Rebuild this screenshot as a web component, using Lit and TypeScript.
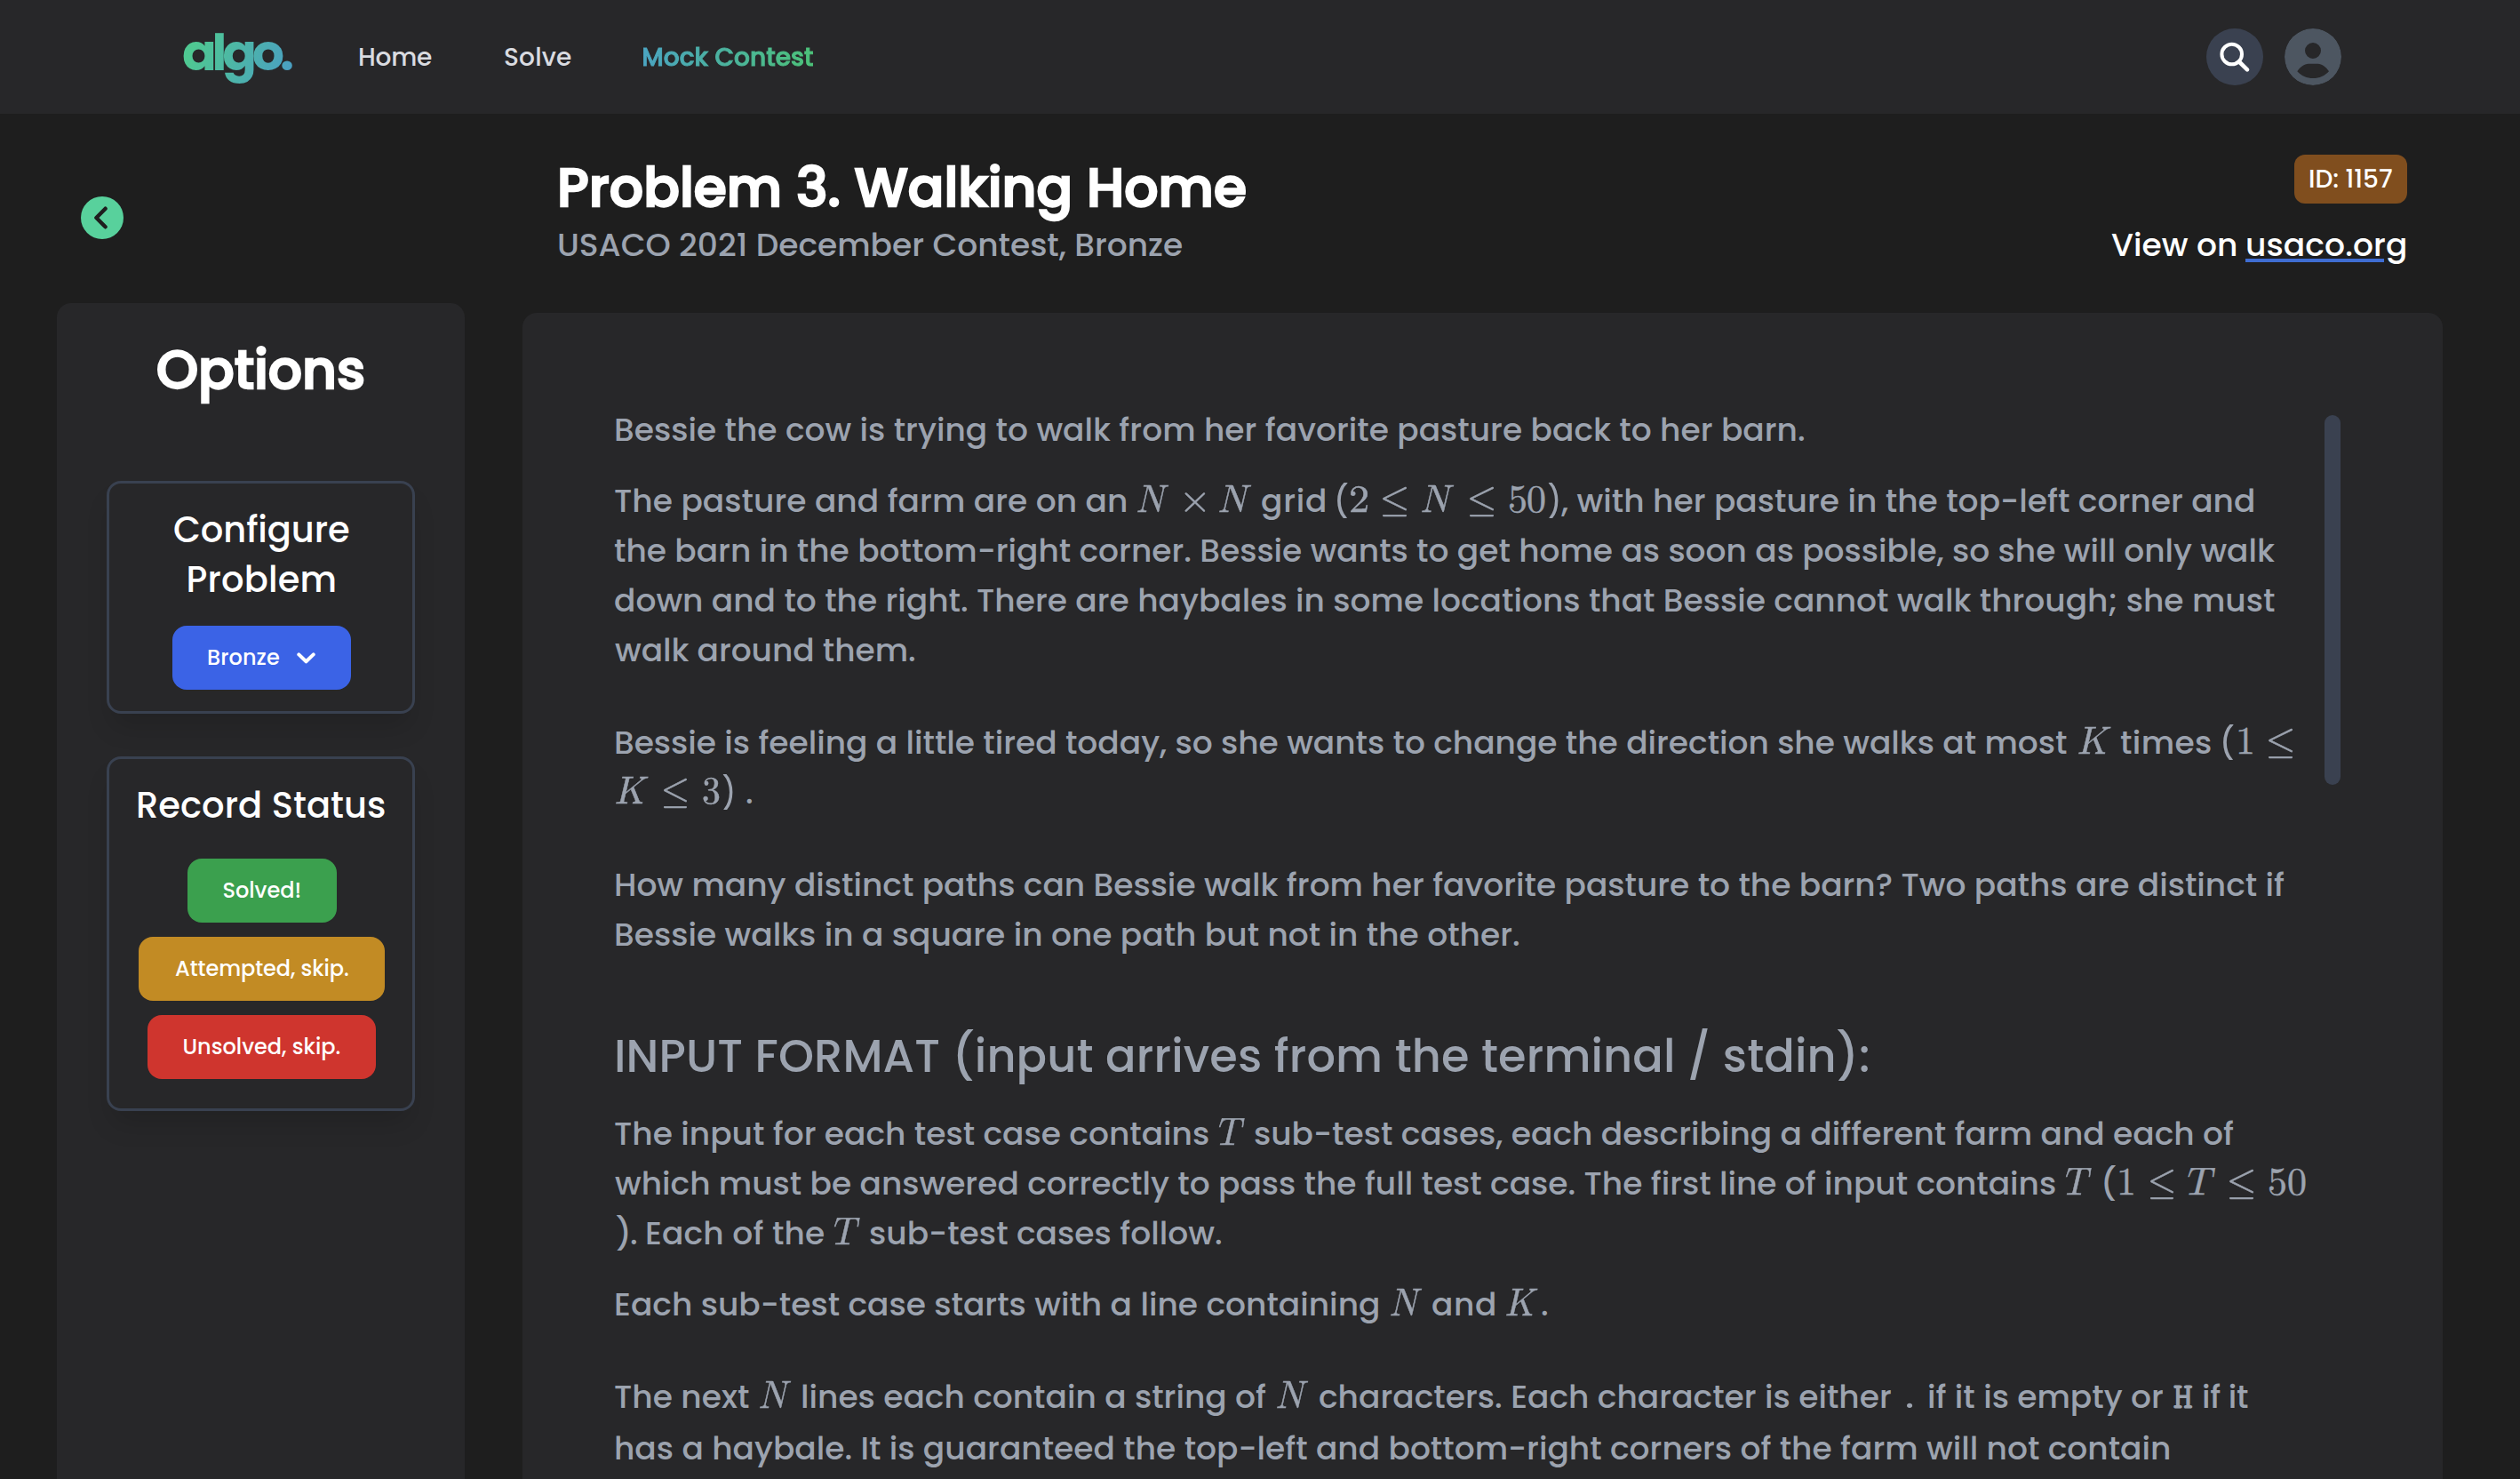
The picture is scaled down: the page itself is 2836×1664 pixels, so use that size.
import { LitElement, html, css, svg, nothing } from "lit";
import { customElement, property } from "lit/decorators.js";
import { styleMap } from "lit/directives/style-map.js";

const pen = document.createElement("canvas").getContext("2d")!;

/** One run of text whose inked width is set; tracking (or, for one glyph, its scale) is derived from it. */
@customElement("fit-text")
export class FitText extends LitElement {
  @property() text = "";
  @property({ type: Number }) w = 0;

  static styles = css`
    :host {
      display: block;
      flex: none;
      white-space: pre;
    }
    .run {
      display: inline-block;
      transform-origin: 0 50%;
      text-decoration: inherit;
    }
  `;

  render() {
    const cs = getComputedStyle(this);
    pen.font = `${cs.fontStyle} ${cs.fontWeight} ${cs.fontSize} ${cs.fontFamily}`;
    const m = pen.measureText(this.text);
    const ink = m.actualBoundingBoxLeft + m.actualBoundingBoxRight;
    const n = [...this.text].length;
    this.style.width = `${this.w}px`;
    const style =
      n > 1
        ? {
            letterSpacing: `${((this.w - ink) / (n - 1)).toFixed(3)}px`,
            marginLeft: `${m.actualBoundingBoxLeft.toFixed(2)}px`,
          }
        : {
            transform: `scaleX(${(this.w / ink).toFixed(3)})`,
            marginLeft: `${((m.actualBoundingBoxLeft * this.w) / ink).toFixed(2)}px`,
          };
    return html`<span class="run" style=${styleMap(style)}>${this.text}</span>`;
  }
}

type Kind = "p" | "v" | "m" | "c";
/** text, left edge, right edge, kind (p prose, v variable, m math, c code) */
type Run = [string, number, number, Kind?];
interface Line {
  runs: Run[];
  gap?: number;
  head?: boolean;
}

const LEFT = 692;

const STATEMENT: Line[] = [
  { runs: [["Bessie the cow is trying to walk from her favorite pasture back to her barn.", 693, 2030]] },
  {
    gap: 24,
    runs: [
      ["The pasture and farm are on an", 692, 1267],
      ["N", 1280, 1316, "v"],
      ["×", 1333, 1356, "m"],
      ["N", 1372, 1409, "v"],
      ["grid", 1420, 1491],
      ["(", 1505, 1517],
      ["2", 1520, 1539, "m"],
      ["≤", 1556, 1584, "m"],
      ["N", 1600, 1637, "v"],
      ["≤", 1654, 1682, "m"],
      ["50", 1699, 1739, "m"],
      [")", 1742, 1754],
      [", with her pasture in the top-left corner and", 1757, 2536],
    ],
  },
  { runs: [["the barn in the bottom-right corner. Bessie wants to get home as soon as possible, so she will only walk", 692, 2560]] },
  { runs: [["down and to the right. There are haybales in some locations that Bessie cannot walk through; she must", 692, 2560]] },
  { runs: [["walk around them.", 692, 1029]] },
  {
    gap: 48,
    runs: [
      ["Bessie is feeling a little tired today, so she wants to change the direction she walks at most", 693, 2326],
      ["K", 2339, 2376, "v"],
      ["times", 2387, 2488],
      ["(", 2502, 2514],
      ["1", 2519, 2535, "m"],
      ["≤", 2553, 2581, "m"],
    ],
  },
  {
    runs: [
      ["K", 693, 730, "v"],
      ["≤", 747, 774, "m"],
      ["3", 791, 810, "m"],
      [")", 813, 825],
      [".", 840, 846],
    ],
  },
  { gap: 48, runs: [["How many distinct paths can Bessie walk from her favorite pasture to the barn? Two paths are distinct if", 693, 2571]] },
  { runs: [["Bessie walks in a square in one path but not in the other.", 693, 1709]] },
  { gap: 78, head: true, runs: [["INPUT FORMAT (input arrives from the terminal / stdin):", 694, 2102]] },
  {
    gap: 30,
    runs: [
      ["The input for each test case contains", 692, 1360],
      ["T", 1372, 1401, "v"],
      ["sub-test cases, each describing a different farm and each of", 1412, 2514],
    ],
  },
  {
    runs: [
      ["which must be answered correctly to pass the full test case. The first line of input contains", 692, 2313],
      ["T", 2325, 2354, "v"],
      ["(", 2368, 2381],
      ["1", 2385, 2401, "m"],
      ["≤", 2420, 2447, "m"],
      ["T", 2462, 2493, "v"],
      ["≤", 2509, 2537, "m"],
      ["50", 2554, 2595, "m"],
    ],
  },
  {
    runs: [
      [").", 693, 716],
      ["Each of the", 728, 927],
      ["T", 939, 968, "v"],
      ["sub-test cases follow.", 979, 1374],
    ],
  },
  {
    gap: 24,
    runs: [
      ["Each sub-test case starts with a line containing", 693, 1551],
      ["N", 1565, 1601, "v"],
      ["and", 1612, 1682],
      ["K", 1695, 1731, "v"],
      [".", 1735, 1741],
    ],
  },
  {
    gap: 48,
    runs: [
      ["The next", 692, 843],
      ["N", 855, 891, "v"],
      ["lines each contain a string of", 903, 1425],
      ["N", 1437, 1473, "v"],
      ["characters. Each character is either", 1485, 2128],
      [".", 2145, 2152, "p"],
      ["if it is empty or", 2171, 2434],
      ["H", 2446, 2467, "c"],
      ["if it", 2480, 2530],
    ],
  },
  { gap: 2, runs: [["has a haybale. It is guaranteed the top-left and bottom-right corners of the farm will not contain", 693, 2441]] },
];

const searchIcon = svg`
  <circle cx="28.7" cy="29" r="11.3" fill="none" stroke="#fff" stroke-width="4"/>
  <path d="M37 37.5 46 46.4" stroke="#fff" stroke-width="4.6" stroke-linecap="round"/>`;

const avatarIcon = svg`
  <path fill="#4d5661" fill-rule="evenodd" d="M32 0a32 32 0 1 0 0 64 32 32 0 0 0 0-64Zm0 16a9 9 0 1 1 0 18 9 9 0 0 1 0-18ZM14.3 48.2C17.8 43.4 22 39.8 27 39.8H37.4C42.4 39.8 46.6 43.4 50 48.2 45.4 53.2 39.2 56 32.2 56S18.8 53.2 14.3 48.2Z"/>`;

@customElement("app-root")
export class AppRoot extends LitElement {
  static styles = css`
    :host {
      display: block;
      width: 2836px;
      height: 1664px;
      overflow: hidden;
      background: #1e1e1e;
      color: #fff;
      font-family: Poppins, Inter, "Open Sans", sans-serif;
      font-weight: 500;
    }
    * {
      box-sizing: border-box;
    }
    header {
      display: flex;
      align-items: center;
      height: 128px;
      padding: 0 201px 0 206px;
      background: #272729;
      font-size: 28px;
      line-height: 42px;
      color: #d9dbe0;
    }
    .logo {
      font-weight: 700;
      font-size: 57px;
      line-height: 76px;
      margin: 0 76px 10px 0;
      color: transparent;
      background: linear-gradient(110deg, #4fc892 15%, #4a9fc2 95%);
      -webkit-background-clip: text;
      background-clip: text;
    }
    .home {
      margin: 1px 82px 0 0;
    }
    .solve {
      margin: 1px 81px 0 0;
    }
    .mock {
      margin-top: 1px;
      color: transparent;
      background: linear-gradient(90deg, #4ba5c1, #4cc279);
      -webkit-background-clip: text;
      background-clip: text;
      -webkit-text-stroke: 1px transparent;
    }
    .tools {
      display: flex;
      gap: 24px;
      margin-left: auto;
    }
    .tools svg {
      display: block;
      width: 64px;
      height: 64px;
      border-radius: 50%;
    }
    .search {
      background: #3a4150;
    }
    main {
      display: grid;
      grid-template-columns: 459px 2161px;
      column-gap: 65px;
      height: 1536px;
      padding-left: 64px;
    }
    .left {
      display: flex;
      flex-direction: column;
      padding-top: 93px;
    }
    .back {
      flex: none;
      display: block;
      width: 48px;
      height: 48px;
      margin: 0 0 72px 27px;
    }
    .side {
      flex: 1;
      display: flex;
      flex-direction: column;
      align-items: center;
      padding-top: 39px;
      border-radius: 16px 16px 0 0;
      background: #272729;
    }
    .options {
      font-size: 60px;
      line-height: 72px;
      margin-bottom: 89px;
      -webkit-text-stroke: 2.4px #fff;
    }
    .card {
      display: flex;
      flex-direction: column;
      align-items: center;
      width: 347px;
      padding: 24px 0 24px 2px;
      border: 3px solid #394150;
      border-radius: 16px;
      background: #272729;
      box-shadow: 0 20px 30px -6px rgba(0, 0, 0, 0.14);
      font-size: 40px;
      line-height: 56px;
    }
    .card + .card {
      margin-top: 48px;
      padding-bottom: 33px;
    }
    .btn {
      display: flex;
      align-items: center;
      justify-content: center;
      height: 72px;
      border-radius: 16px;
      font-size: 24px;
      line-height: 72px;
    }
    .bronze {
      width: 201px;
      margin-top: 24px;
      gap: 20px;
      background: #3b63e6;
    }
    .chev {
      width: 21px;
      height: 13px;
    }
    .stack {
      display: flex;
      flex-direction: column;
      align-items: center;
      gap: 16px;
      margin-top: 32px;
    }
    .solved {
      width: 168px;
      background: #3ba04e;
    }
    .attempted {
      width: 277px;
      background: #c28b24;
    }
    .unsolved {
      width: 257px;
      background: #cf352e;
    }
    .right {
      display: flex;
      flex-direction: column;
      min-height: 0;
    }
    .top {
      flex: none;
      display: flex;
      justify-content: space-between;
      height: 224px;
      padding: 46px 40px 0 41px;
    }
    .title {
      margin: 1px 0 0 2px;
      font-size: 60px;
      line-height: 72px;
      -webkit-text-stroke: 2.4px #fff;
    }
    .sub {
      margin-top: 5px;
      font-size: 36px;
      line-height: 48px;
      color: #9ca3af;
    }
    .meta {
      display: flex;
      flex-direction: column;
      align-items: flex-end;
      gap: 23px;
    }
    .badge {
      display: flex;
      justify-content: center;
      width: 127px;
      height: 55px;
      padding-left: 1px;
      border-radius: 12px;
      background: #804e1e;
      font-size: 28px;
      line-height: 56px;
    }
    .view {
      display: flex;
      gap: 13px;
      margin-right: 2px;
      font-size: 36px;
      line-height: 48px;
    }
    .link {
      text-decoration: underline #3f6dd2 4px;
      text-underline-offset: 3px;
    }
    .panel {
      flex: 1;
      min-height: 0;
      overflow: hidden;
      display: flex;
      padding: 104px 0 0 104px;
      border-radius: 16px 16px 0 0;
      background: #272729;
      color: #9ca3af;
    }
    .text {
      width: 1924px;
      font-size: 36px;
      line-height: 56px;
    }
    .line {
      display: flex;
      align-items: baseline;
      height: 56px;
    }
    .line.head {
      height: 60px;
      font-size: 51px;
      line-height: 60px;
    }
    .v,
    .m,
    .c {
      font-weight: 400;
      font-family: KaTeX_Main, MathJax_Main, "Latin Modern Math", "Liberation Serif", serif;
      font-size: 44px;
      line-height: 50px;
      -webkit-text-stroke: 0.5px #9ca3af;
    }
    .v {
      font-style: italic;
    }
    .c {
      font-family: KaTeX_Typewriter, "Latin Modern Mono", "LM Mono 10", "Latin Modern Math", "Liberation Serif", serif;
      font-size: 41px;
      -webkit-text-stroke: 1.2px #9ca3af;
    }
    .thumb {
      width: 18px;
      height: 416px;
      margin-top: 11px;
      border-radius: 9px;
      background: #3a4150;
    }
  `;

  private line(l: Line) {
    let x = LEFT;
    const runs = l.runs.map(([text, from, to, kind]) => {
      const lead = from - x;
      x = to;
      return html`<fit-text
        class=${kind ?? "p"}
        style=${styleMap({ marginLeft: `${lead}px` })}
        .text=${text}
        .w=${to - from}
      ></fit-text>`;
    });
    return html`<div
      class=${l.head ? "line head" : "line"}
      style=${l.gap ? styleMap({ marginTop: `${l.gap}px` }) : nothing}
    >${runs}</div>`;
  }

  render() {
    return html`
      <header>
        <fit-text class="logo" .text=${"algo."} .w=${123}></fit-text>
        <fit-text class="home" .text=${"Home"} .w=${81}></fit-text>
        <fit-text class="solve" .text=${"Solve"} .w=${75}></fit-text>
        <fit-text class="mock" .text=${"Mock Contest"} .w=${191}></fit-text>
        <div class="tools">
          <svg class="search" viewBox="0 0 64 64">${searchIcon}</svg>
          <svg viewBox="0 0 64 64">${avatarIcon}</svg>
        </div>
      </header>
      <main>
        <div class="left">
          <svg class="back" viewBox="0 0 48 48">
            <circle cx="24" cy="24" r="24" fill="#58d19c" />
            <path d="M27.6 13.7 17.4 24 27.6 34.3" fill="none" stroke="#1e1e1e" stroke-width="4.4" stroke-linecap="round" stroke-linejoin="round" />
          </svg>
          <div class="side">
            <fit-text class="options" .text=${"Options"} .w=${231}></fit-text>
            <div class="card">
              <fit-text .text=${"Configure"} .w=${197}></fit-text>
              <fit-text .text=${"Problem"} .w=${164}></fit-text>
              <div class="btn bronze">
                <fit-text .text=${"Bronze"} .w=${80}></fit-text>
                <svg class="chev" viewBox="0 0 21 13">
                  <path d="M2.3 2.4 10.5 10.3 18.7 2.4" fill="none" stroke="#fff" stroke-width="4" stroke-linecap="round" stroke-linejoin="round" />
                </svg>
              </div>
            </div>
            <div class="card">
              <fit-text .text=${"Record Status"} .w=${277}></fit-text>
              <div class="stack">
                <div class="btn solved"><fit-text .text=${"Solved!"} .w=${86}></fit-text></div>
                <div class="btn attempted"><fit-text .text=${"Attempted, skip."} .w=${195}></fit-text></div>
                <div class="btn unsolved"><fit-text .text=${"Unsolved, skip."} .w=${176}></fit-text></div>
              </div>
            </div>
          </div>
        </div>
        <div class="right">
          <div class="top">
            <div>
              <fit-text class="title" .text=${"Problem 3. Walking Home"} .w=${770}></fit-text>
              <fit-text class="sub" .text=${"USACO 2021 December Contest, Bronze"} .w=${701}></fit-text>
            </div>
            <div class="meta">
              <div class="badge"><fit-text .text=${"ID: 1157"} .w=${92}></fit-text></div>
              <div class="view">
                <fit-text .text=${"View on"} .w=${140}></fit-text>
                <fit-text class="link" .text=${"usaco.org"} .w=${178}></fit-text>
              </div>
            </div>
          </div>
          <div class="panel">
            <div class="text">${STATEMENT.map((l) => this.line(l))}</div>
            <div class="thumb"></div>
          </div>
        </div>
      </main>
    `;
  }
}
